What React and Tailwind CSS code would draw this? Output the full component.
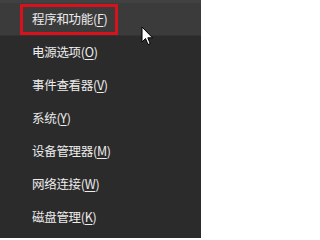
import React from 'react'

const ITEMS = [
  { label: '程序和功能', key: 'F' },
  { label: '电源选项', key: 'O' },
  { label: '事件查看器', key: 'V' },
  { label: '系统', key: 'Y' },
  { label: '设备管理器', key: 'M' },
  { label: '网络连接', key: 'W' },
  { label: '磁盘管理', key: 'K' },
]

function Cursor() {
  return (
    <svg width="13" height="20" viewBox="0 0 13 20" className="absolute left-[141px] top-[26px]">
      <path d="M1 1 L1 16 L4.5 12.5 L7 18.5 L9.2 17.6 L6.8 11.8 L11.5 11.8 Z" fill="#fff" stroke="#000" strokeWidth="1" strokeLinejoin="round" />
    </svg>
  )
}

export default function App() {
  return (
    <div className="relative w-[201px] h-[238px] overflow-hidden bg-[#2b2b2b] text-[12.5px] text-[#ececec]" style={{ fontFamily: '"Noto Sans CJK SC", "Noto Sans", sans-serif' }}>
      <div className="h-[3px] bg-[#414141]" />
      {ITEMS.map((it, i) => (
        <div key={it.key} className={`h-[33px] flex items-center pl-[32px] ${i === 0 ? 'bg-[#3b3b3b] border-b border-[#333]' : ''}`}>
          <span className="leading-none tracking-[-0.3px]">
            {it.label}(<span className="underline underline-offset-[1.5px]">{it.key}</span>)
          </span>
        </div>
      ))}
      <div className="absolute left-[20px] top-[4px] w-[98px] h-[31px] border-[3px] border-[#d8121c]" />
      <Cursor />
    </div>
  )
}
